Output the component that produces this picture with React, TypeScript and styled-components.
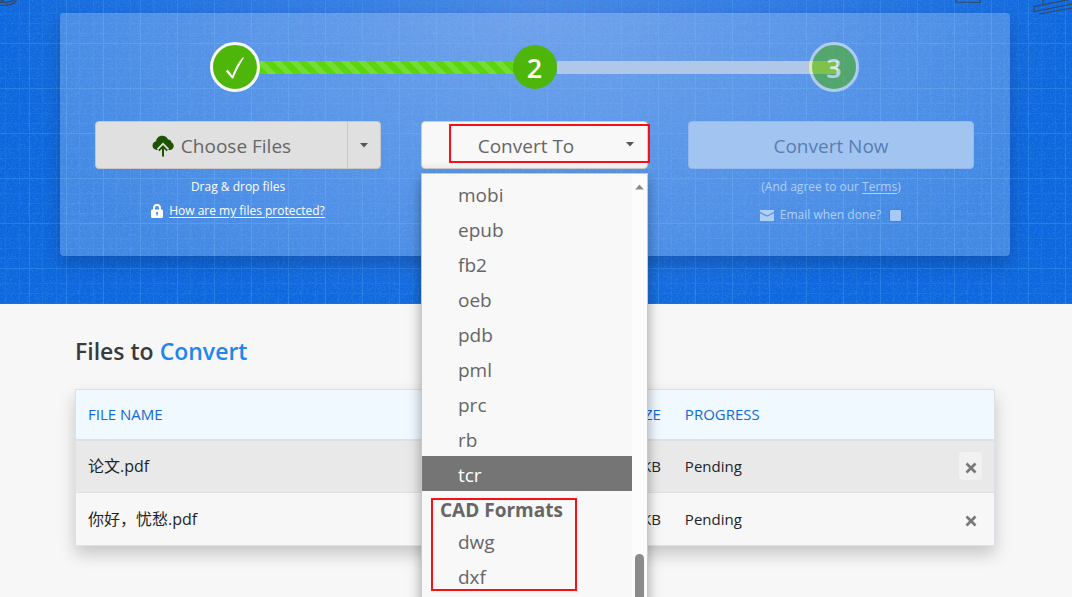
import React from 'react';
import styled, { createGlobalStyle, css } from 'styled-components';

const GlobalStyle = createGlobalStyle`
  *, *::before, *::after { box-sizing: border-box; }
  body {
    margin: 0;
    background: #f7f7f7;
    color: #212529;
    font-family: "Open Sans", "Noto Sans CJK SC", sans-serif;
    font-size: 15px;
    line-height: 24px;
  }
  button, select, input { font: inherit; }
`;

const Page = styled.div`
  min-height: 100vh;
  max-height: 100vh;
  overflow: hidden;
`;

const Hero = styled.header`
  position: relative;
  padding: 13px 62px 48px 60px;
  background: radial-gradient(ellipse 50% 110% at 50% 0, #4c8ae5 0%, #2c78e2 55%, #0f68dd 100%);
`;

const Backdrop = styled.svg`
  position: absolute;
  inset: 0;
  width: 100%;
  height: 100%;
`;

const CornerSketch = styled.svg`
  position: absolute;
  top: 0;
  ${(p: { $side: 'left' | 'right' }) => p.$side}: 0;
`;

const Panel = styled.section`
  position: relative;
  z-index: 1;
  min-height: 243px;
  padding: 29px 36px 28px 35px;
  border-radius: 4px;
  background: rgba(255, 255, 255, 0.22);
  box-shadow: 0 8px 16px rgba(0, 20, 70, 0.26);
`;

const Steps = styled.ol`
  display: grid;
  grid-template-columns: 50px 1fr 44px 1fr 50px;
  align-items: center;
  height: 50px;
  margin: 0 0 29px;
  padding: 0 115px;
  list-style: none;
`;

const Step = styled.li<{ $ring?: boolean; $faded?: boolean }>`
  display: flex;
  align-items: center;
  justify-content: center;
  height: ${p => (p.$ring ? 50 : 44)}px;
  border: ${p => (p.$ring ? '3px solid #f7f7f7' : '0')};
  border-radius: 50%;
  background: #4eb50b;
  color: #fff;
  font-size: 27px;
  font-weight: 600;
  line-height: 44px;
  padding-top: 2px;
  opacity: ${p => (p.$faded ? 0.55 : 1)};
`;

const Track = styled.li<{ $done?: boolean }>`
  height: 13px;
  ${p =>
    p.$done
      ? css`
          background: repeating-linear-gradient(45deg, #5bd60d 0 6px, #74dd33 6px 12px);
        `
      : css`
          margin-right: -29px;
          background: linear-gradient(90deg, #b0c7e9 0 89%, #bcd49a 90%);
        `}
`;

const Columns = styled.div`
  display: grid;
  grid-template-columns: 286fr 227fr 286fr;
  gap: 40px;
`;

const Column = styled.div<{ $faded?: boolean }>`
  position: relative;
  display: flex;
  flex-direction: column;
  align-items: center;
  color: ${p => (p.$faded ? '#b0cff7' : '#fff')};
  font-size: 12px;
  font-weight: 500;
`;

const SplitButton = styled.div`
  display: flex;
  width: 100%;
  height: 48px;
  border: 1px solid #c8c8c8;
  border-radius: 4px;
  background: #e0e0e0;
  overflow: hidden;
`;

const PlainButton = styled.button`
  display: flex;
  align-items: center;
  justify-content: center;
  gap: 7px;
  padding: 0;
  border: 0;
  background: transparent;
  color: #666;
  font-size: 19px;
  font-weight: 400;
`;

const ChooseButton = styled(PlainButton)`
  flex: 1;
  padding-top: 2px;
`;

const CaretButton = styled(PlainButton)`
  width: 33px;
  border-left: 1px solid #c8c8c8;
`;

const ConvertButton = styled(PlainButton)`
  width: 100%;
  height: 48px;
  padding-top: 2px;
  border: 1px solid #93b8ed;
  border-radius: 4px;
  background: #a2c4f0;
  color: #587eb3;
`;

const Hint = styled.p`
  display: flex;
  align-items: center;
  gap: 6px;
  margin: 0;
  line-height: 24px;

  a { color: inherit; text-underline-offset: 2px; }
`;

const FirstHint = styled(Hint)`
  margin-top: 6px;
  gap: 0;
`;

const EmailHint = styled(Hint)`
  margin-top: 4px;
  label { margin-right: 2px; }
`;

const EmailBox = styled.input`
  appearance: none;
  width: 13px;
  height: 13px;
  margin: 0;
  border: 1px solid #5c7db0;
  border-radius: 2px;
  background: #a8c8f5;
`;

const SelectWrap = styled.div`
  position: relative;
  width: 100%;
  height: 48px;

  svg { position: absolute; right: 13px; top: 21px; pointer-events: none; }
`;

const FormatSelect = styled.select`
  appearance: none;
  width: 100%;
  height: 48px;
  padding: 2px 17px 0 0;
  border: 1px solid #ccc;
  border-radius: 4px;
  background: linear-gradient(#f8f8f8 85%, #eee);
  color: #666;
  font-size: 19px;
  font-weight: 400;
  text-align: center;
  text-align-last: center;
`;

const Highlight = styled.div<{ $over: 'select' | 'group' }>`
  position: absolute;
  border: 2px solid #fa0f14;
  pointer-events: none;
  ${p =>
    p.$over === 'select'
      ? css`
          inset: 3px -2px 6px 28px;
        `
      : css`
          inset: 7px 55px 2px 9px;
        `}
`;

const Menu = styled.div`
  position: absolute;
  top: 52px;
  left: 0;
  right: 0;
  display: flex;
  height: 470px;
  border: 1px solid #c9c9c9;
  background: #f8f8f8;
  font-weight: 400;
  box-shadow: 0 6px 12px rgba(0, 0, 0, 0.35);
`;

const Formats = styled.div`
  flex: 1;
  padding-top: 2px;
`;

const FormatList = styled.ul`
  position: relative;
  margin: 0;
  padding: 0;
  list-style: none;
`;

const Format = styled.li<{ $active?: boolean }>`
  height: 35px;
  padding-left: 36px;
  background: ${p => (p.$active ? '#757575' : 'transparent')};
  color: ${p => (p.$active ? '#fff' : '#666')};
  font-size: 19px;
  line-height: 38px;
`;

const FormatHeading = styled.li`
  height: 32px;
  padding-left: 18px;
  color: #666;
  font-size: 19px;
  font-weight: 700;
  line-height: 38px;
`;

const ScrollTrack = styled.div`
  display: flex;
  flex-direction: column;
  align-items: center;
  gap: 364px;
  width: 15px;
  padding-top: 10px;
  background: #fcfcfc;
`;

const ScrollThumb = styled.div`
  width: 9px;
  height: 90px;
  border-radius: 5px;
  background: #8b8b8b;
`;

const Files = styled.main`
  padding: 29px 77px 50px 75px;
`;

const Title = styled.h2`
  margin: 0 0 20px;
  color: #3b3b3b;
  font-size: 23px;
  font-weight: 600;
  line-height: 36px;

  span { color: #2186eb; }
`;

const FileTable = styled.table`
  width: 100%;
  table-layout: fixed;
  border-collapse: collapse;
  border: 1px solid #dbe1e6;
  box-shadow: 0 8px 16px rgba(0, 0, 0, 0.2);

  th {
    height: 50px;
    padding: 0 12px;
    border-bottom: 2px solid #dbe1e6;
    background: #f0f9ff;
    color: #1469d6;
    font-size: 15px;
    font-weight: 400;
    text-align: left;
  }
  td {
    height: 53px;
    padding: 0 12px;
    border-bottom: 1px solid #dee2e6;
    background: #f7f7f7;
  }
  td:first-child { font-size: 16px; }
  tbody tr:first-child td { background: #e9e9e9; }
  tr > :nth-child(2) { width: 20%; text-align: right; }
  tr > :nth-child(3) { width: 25%; }
  tr > :nth-child(4) { width: 10%; }
`;

const RemoveButton = styled.button<{ $hover?: boolean }>`
  display: flex;
  align-items: center;
  justify-content: center;
  width: 23px;
  height: 28px;
  margin-left: auto;
  padding: 3px 0 0;
  border: 0;
  border-radius: 4px;
  background: ${p => (p.$hover ? '#f1f1f1' : 'transparent')};
`;

function buildSpecks(count: number, width: number, height: number, start: number) {
  let seed = start;
  const next = () => {
    seed = (seed * 1103515245 + 12345) % 2147483648;
    return seed / 2147483648;
  };
  let d = '';
  for (let i = 0; i < count; i += 1) {
    const x = Math.floor(next() * width);
    const y = Math.floor(next() * height);
    d += `M${x} ${y}h1v1h-1z`;
  }
  return d;
}

const lightSpecks = buildSpecks(2700, 111, 90, 7);
const darkSpecks = buildSpecks(1400, 111, 90, 91);

const Blueprint = () => (
  <Backdrop aria-hidden="true">
    <defs>
      <pattern id="specks" width="111" height="90" patternUnits="userSpaceOnUse">
        <path d={lightSpecks} fill="#52a8f5" opacity="0.16" />
        <path d={darkSpecks} fill="#0050c8" opacity="0.1" />
      </pattern>
      <pattern id="grid" x="29" y="43" width="37" height="45" patternUnits="userSpaceOnUse">
        <path d="M0 0h1v45h-1zM0 0h37v1h-37z" fill="#45a5f5" opacity="0.36" />
        <path d="M13 0h1v45h-1zM27 0h1v45h-1zM0 15h37v1h-37zM0 25h37v1h-37zM0 35h37v1h-37z" fill="#45a5f5" opacity="0.14" />
      </pattern>
    </defs>
    <rect width="100%" height="100%" fill="url(#specks)" />
    <rect width="100%" height="100%" fill="url(#grid)" />
  </Backdrop>
);

const Caret = ({ wide = 8 }: { wide?: number }) => (
  <svg width={wide} height="5" viewBox="0 0 8 5" aria-hidden="true">
    <path d="M0 0h8L4 4.6z" fill="#555" />
  </svg>
);

const CloudUpload = () => (
  <svg width="22" height="22" viewBox="0 0 22 22" aria-hidden="true">
    <path
      d="M5 15C2 15 0.5 13 0.5 10.6C0.5 8.3 2 6.6 4 6.3C4.6 3 7 .8 10.2 .8C13 .8 15 2.200 16 4.400C18.300 4.300 19.500 5.800 19.500 7.500C21 8 21.700 9.400 21.700 11C21.700 13.300 20.200 15 17.800 15Z"
      fill="#1d5403"
    />
    <path d="M11 22V12M6.600 15.400L11 11L15.400 15.400" fill="none" stroke="#e0e0e0" strokeWidth="5" />
    <path d="M11 21.500V12.300M6.800 15.600L11 11.400L15.200 15.600" fill="none" stroke="#1d5403" strokeWidth="2" />
  </svg>
);

const Lock = () => (
  <svg width="12" height="14" viewBox="0 0 12 14" aria-hidden="true">
    <path d="M3 6V4a3 3 0 0 1 6 0v2" fill="none" stroke="#fff" strokeWidth="2" />
    <rect y="5.500" width="12" height="8.500" rx="1.200" fill="#fff" />
    <path d="M6 8a1.100 1.100 0 0 1 .6 2v1.600H5.400V10A1.100 1.100 0 0 1 6 8z" fill="#3c86e6" />
  </svg>
);

const Envelope = () => (
  <svg width="14" height="11" viewBox="0 0 14 11" aria-hidden="true">
    <path d="M0 0h14v1.800L7 5.400L0 1.800zM0 3.200L7 6.800L14 3.200V11H0z" fill="#b0cff7" />
  </svg>
);

const Check = () => (
  <svg width="20" height="22" viewBox="0 0 20 22" aria-hidden="true">
    <path d="M.8 14.200L2.800 12.800L7.300 18.500C9.800 12 13 6 17.400 .8L19.200 .6C15 6.500 11.500 13.500 8.400 21.200L7 21.600Z" fill="#fff" />
  </svg>
);

const Cross = () => (
  <svg width="12" height="12" viewBox="0 0 12 12" aria-hidden="true">
    <path d="M1.500 1.500L10.500 10.500M10.500 1.500L1.500 10.500" stroke="#777" strokeWidth="2.600" />
  </svg>
);

const ebookFormats = ['mobi', 'epub', 'fb2', 'oeb', 'pdb', 'pml', 'prc', 'rb', 'tcr'];
const files = [
  { name: '论文.pdf', size: '680 KB', status: 'Pending' },
  { name: '你好，忧愁.pdf', size: '512 KB', status: 'Pending' },
];

export default function App() {
  return (
    <Page>
      <GlobalStyle />
      <Hero>
        <Blueprint />
        <CornerSketch $side="left" width="20" height="8" viewBox="0 0 20 8" aria-hidden="true">
          <path d="M0 2.500C6 2.500 11 2 14 0M0 5.500C9 5.500 15 4 16.500 0M4 0C3 1 1 1 0 1" fill="none" stroke="#34475f" strokeWidth="1.200" />
        </CornerSketch>
        <CornerSketch $side="right" width="122" height="16" viewBox="0 0 122 16" aria-hidden="true">
          <path
            d="M6 0V2L30 2.500V0M122 -1L84 6.500V11.500L122 4M89 14L122 8M93 5V0M93 5L116 0"
            fill="none"
            stroke="#34475f"
            strokeWidth="1.200"
          />
        </CornerSketch>
        <Panel aria-label="Convert files">
          <Steps>
            <Step $ring aria-label="Step 1 done"><Check /></Step>
            <Track $done role="presentation" />
            <Step>2</Step>
            <Track role="presentation" />
            <Step $ring $faded>3</Step>
          </Steps>
          <Columns>
            <Column>
              <SplitButton>
                <ChooseButton type="button"><CloudUpload />Choose Files</ChooseButton>
                <CaretButton type="button" aria-label="More sources"><Caret /></CaretButton>
              </SplitButton>
              <FirstHint>Drag &amp; drop files</FirstHint>
              <Hint><Lock /><a href="#protection">How are my files protected?</a></Hint>
            </Column>
            <Column>
              <SelectWrap>
                <FormatSelect aria-label="Output format">
                  <option>Convert To</option>
                </FormatSelect>
                <Caret wide={10} />
                <Highlight $over="select" />
              </SelectWrap>
              <Menu>
                <Formats role="listbox" aria-label="Formats">
                  <FormatList role="group" aria-label="Ebook formats">
                    {ebookFormats.map(name => (
                      <Format key={name} role="option" aria-selected={name === 'tcr'} $active={name === 'tcr'}>
                        {name}
                      </Format>
                    ))}
                  </FormatList>
                  <FormatList role="group" aria-label="CAD formats">
                    <FormatHeading role="presentation">CAD Formats</FormatHeading>
                    <Format role="option" aria-selected={false}>dwg</Format>
                    <Format role="option" aria-selected={false}>dxf</Format>
                    <Highlight $over="group" />
                  </FormatList>
                </Formats>
                <ScrollTrack>
                  <svg width="9" height="6" viewBox="0 0 9 6" aria-hidden="true">
                    <path d="M0 5.500L4.500 .5L9 5.500z" fill="#8b8b8b" />
                  </svg>
                  <ScrollThumb />
                </ScrollTrack>
              </Menu>
            </Column>
            <Column $faded>
              <ConvertButton type="button">Convert Now</ConvertButton>
              <FirstHint>(And agree to our&nbsp;<a href="#terms">Terms</a>)</FirstHint>
              <EmailHint>
                <Envelope />
                <label htmlFor="email-done">Email when done?</label>
                <EmailBox id="email-done" type="checkbox" />
              </EmailHint>
            </Column>
          </Columns>
        </Panel>
      </Hero>
      <Files>
        <Title>Files to <span>Convert</span></Title>
        <FileTable>
          <thead>
            <tr>
              <th scope="col">FILE NAME</th>
              <th scope="col">FILE SIZE</th>
              <th scope="col">PROGRESS</th>
              <th aria-label="Remove" />
            </tr>
          </thead>
          <tbody>
            {files.map((file, i) => (
              <tr key={file.name}>
                <td>{file.name}</td>
                <td>{file.size}</td>
                <td>{file.status}</td>
                <td>
                  <RemoveButton type="button" aria-label={`Remove ${file.name}`} $hover={i === 0}><Cross /></RemoveButton>
                </td>
              </tr>
            ))}
          </tbody>
        </FileTable>
      </Files>
    </Page>
  );
}
